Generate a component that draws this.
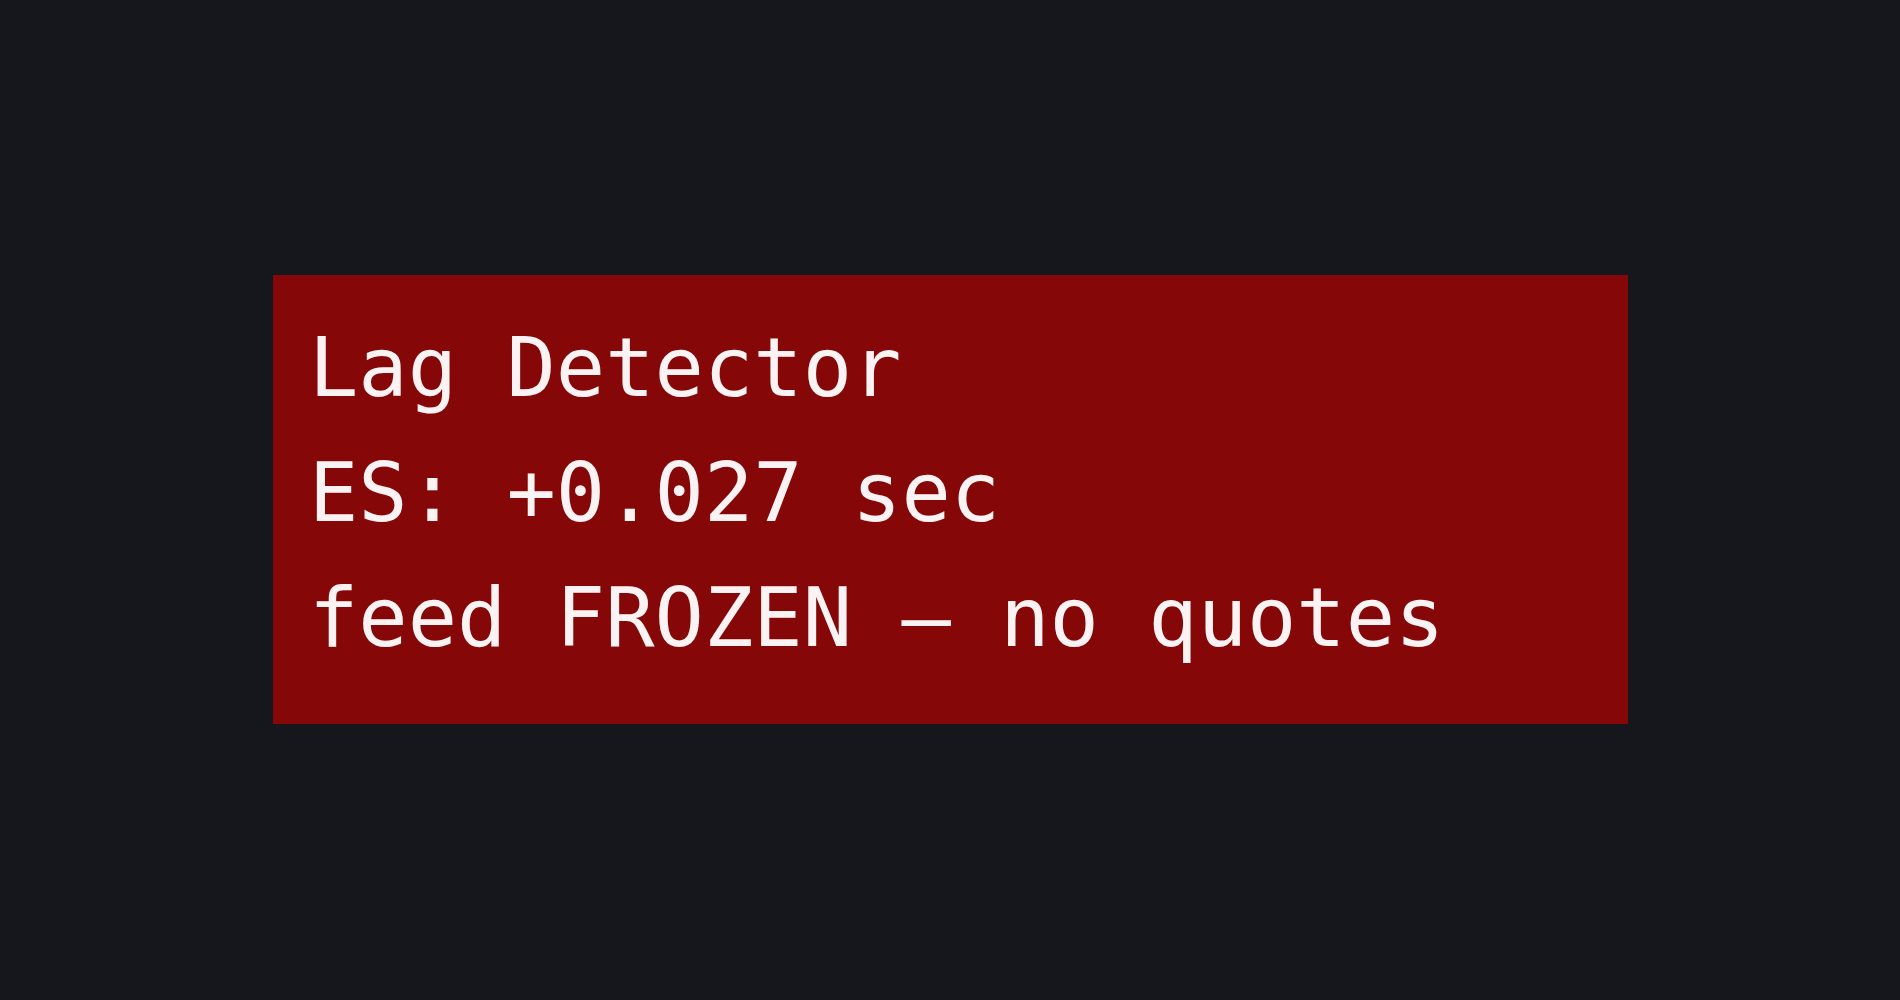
import React from 'react'

const lines = ['Lag Detector', 'ES: +0.027 sec', 'feed FROZEN — no quotes']

const App = () => {
    return (
        <main className="min-h-screen w-full bg-[#16171c] pl-[273px] pt-[275px]">
            <section
                className="w-[1355px] h-[449px] bg-[#850707] pl-[36px] pt-[30px] text-[#fbf3f3] text-[82px] leading-[125px]"
                style={{ fontFamily: '"DejaVu Sans Mono", "Liberation Mono", monospace' }}
            >
                {lines.map((line) => (
                    <div key={line} className="whitespace-pre">{line}</div>
                ))}
            </section>
        </main>
    )
}

export default App
